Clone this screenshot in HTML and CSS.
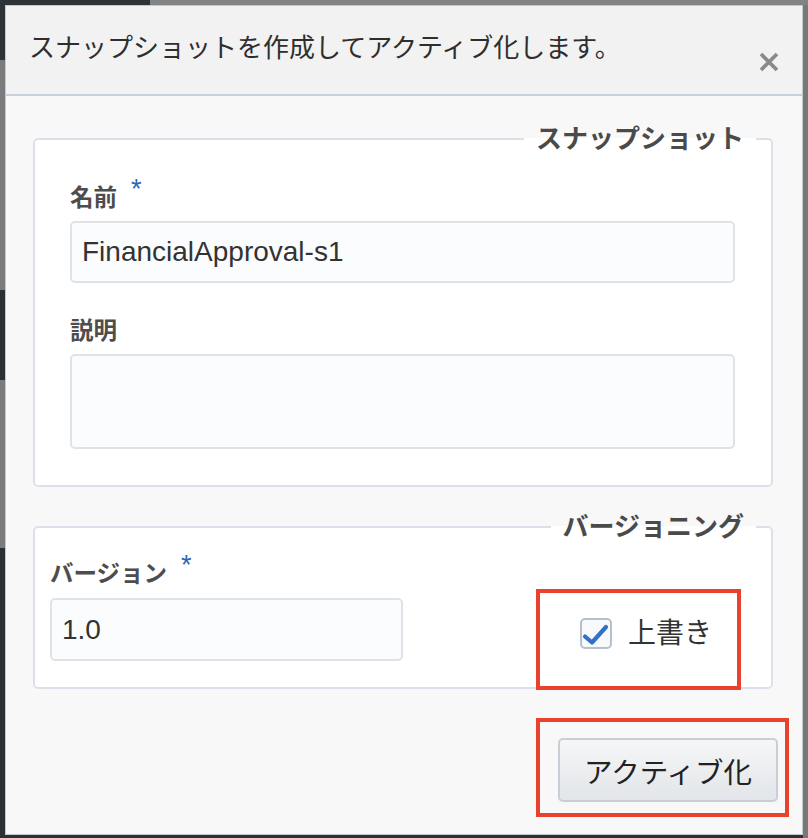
FILE: index.html
```html
<!DOCTYPE html>
<html lang="ja">
<head>
<meta charset="utf-8">
<title>スナップショット</title>
<link rel="stylesheet" href="styles.css">
</head>
<body>
<div class="dialog">
  <div class="header">
    <h1 class="title">スナップショットを作成してアクティブ化します。</h1>
    <button class="close" type="button" aria-label="閉じる">
      <svg width="20" height="20" viewBox="0 0 20 20"><path d="M2 2 L18 18 M18 2 L2 18" stroke="#8a8a8a" stroke-width="3.8" fill="none"/></svg>
    </button>
  </div>
  <div class="body">
    <fieldset class="group group-snapshot">
      <legend>スナップショット</legend>
      <label class="field-label">名前<span class="req">*</span></label>
      <input class="text-input input-name" type="text" value="FinancialApproval-s1">
      <label class="field-label label-desc">説明</label>
      <textarea class="text-area"></textarea>
    </fieldset>
    <fieldset class="group group-version">
      <legend>バージョニング</legend>
      <div class="version-row">
        <div class="version-col">
          <label class="field-label">バージョン<span class="req">*</span></label>
          <input class="text-input version-input" type="text" value="1.0">
        </div>
        <label class="check">
          <span class="check-box"><svg width="28" height="28" viewBox="0 0 28 28"><path d="M3 16.5 L10 22.5 L24 7" stroke="#3371c9" stroke-width="4.2" fill="none" stroke-linecap="round" stroke-linejoin="round"/></svg></span>
          <span class="check-text">上書き</span>
        </label>
      </div>
    </fieldset>
    <div class="footer">
      <button class="primary" type="button">アクティブ化</button>
    </div>
  </div>
  <div class="mark mark-check"></div>
  <div class="mark mark-button"></div>
</div>
</body>
</html>
```

FILE: styles.css
```css
* { box-sizing: border-box; }
html, body { margin: 0; height: 100%; }
body {
  overflow: hidden;
  font-family: "Liberation Sans", "Noto Sans CJK JP", sans-serif;
  background:
    linear-gradient(#828385, #828385) 150px 0 / 100% 5px no-repeat,
    linear-gradient(#77787a, #77787a) 803px 0 / 5px 100% no-repeat,
    linear-gradient(to bottom, #2e3338 0, #2e3338 60px, #7a7b7d 60px, #7a7b7d 290px, #2b3035 290px, #2b3035 380px, #7a7b7d 380px, #7a7b7d 548px, #2b3035 548px);
}
.dialog {
  position: relative;
  width: 798px;
  height: 830px;
  margin: 5px 5px 0 5px;
  background: #f8f8f8;
  border: 1px solid #c4c9ce;
}
.header {
  height: 90px;
  background: #f2f2f2;
  border-bottom: 2px solid #c9d2dc;
  display: flex;
  justify-content: space-between;
  align-items: flex-start;
  padding: 0 23px 0 23px;
}
.title {
  margin: 27px 0 0 0;
  font-size: 26px;
  line-height: 30px;
  font-weight: 400;
  color: #2e2e2e;
}
.close {
  margin-top: 46px;
  width: 20px;
  height: 20px;
  padding: 0;
  border: 0;
  background: none;
  display: block;
}
.close svg { display: block; }
.body {
  padding: 28px 29px 0 27px;
}
.group {
  margin: 0;
  min-width: 0;
  border: 2px solid #dce1e9;
  border-radius: 5px;
  background: #fff;
}
.group legend {
  margin-left: auto;
  padding: 0 12px;
  font-size: 26px;
  line-height: 30px;
  font-weight: 700;
  color: #4a4a4a;
}
.group-snapshot { padding: 30px 36px 36px 35px; }
.group-snapshot legend { margin-right: -21px; }
.group-version { margin-top: 25px; padding: 18px 20px 26px 15px; }
.group-version legend { margin-right: -5px; }
.field-label {
  display: block;
  font-size: 23.5px;
  line-height: 28px;
  font-weight: 700;
  color: #4d4d4d;
}
.req {
  color: #2b67b5;
  font-weight: 400;
  font-size: 27px;
  line-height: 0;
  margin-left: 14px;
  vertical-align: 8px;
}
.text-input {
  display: block;
  width: 100%;
  height: 62px;
  margin: 9px 0 0 0;
  border: 2px solid #dfe3e8;
  border-radius: 5px;
  background: #fbfcfd;
  padding: 0 10px;
  font: 28px "Liberation Sans", "Noto Sans CJK JP", sans-serif;
  color: #333;
  outline: none;
}
.label-desc { margin-top: 34px; }
.text-area {
  display: block;
  width: 100%;
  height: 95px;
  margin: 9px 0 0 0;
  border: 2px solid #dfe3e8;
  border-radius: 5px;
  background: #fbfcfd;
  resize: none;
  outline: none;
}
.version-row {
  display: flex;
  align-items: flex-end;
}
.version-col { width: 353px; }
.version-input { height: 63px; margin-top: 10px; }
.check {
  display: flex;
  align-items: center;
  height: 63px;
  padding-top: 8px;
  margin-left: 177px;
}
.check-box {
  width: 32px;
  height: 31px;
  border: 2px solid #b6c0cb;
  border-radius: 5px;
  background: #f7f9fb;
  display: flex;
  align-items: center;
  justify-content: center;
}
.check-box svg { display: block; flex: none; }
.check-text {
  margin-left: 16px;
  font-size: 28px;
  line-height: 32px;
  color: #333;
}
.footer {
  display: flex;
  justify-content: flex-end;
  margin: 49px -5px 0 0;
}
.primary {
  width: 220px;
  height: 64px;
  border: 2px solid #c8cfd7;
  border-radius: 5px;
  background: linear-gradient(#f5f6f7, #e2e5e9);
  font: 28.5px "Liberation Sans", "Noto Sans CJK JP", sans-serif;
  color: #222;
  padding: 0;
}
.mark {
  position: absolute;
  border: 4px solid #e8412c;
}
.mark-check { left: 530px; top: 583px; width: 205px; height: 101px; }
.mark-button { left: 530px; top: 712px; width: 253px; height: 99px; }
```
